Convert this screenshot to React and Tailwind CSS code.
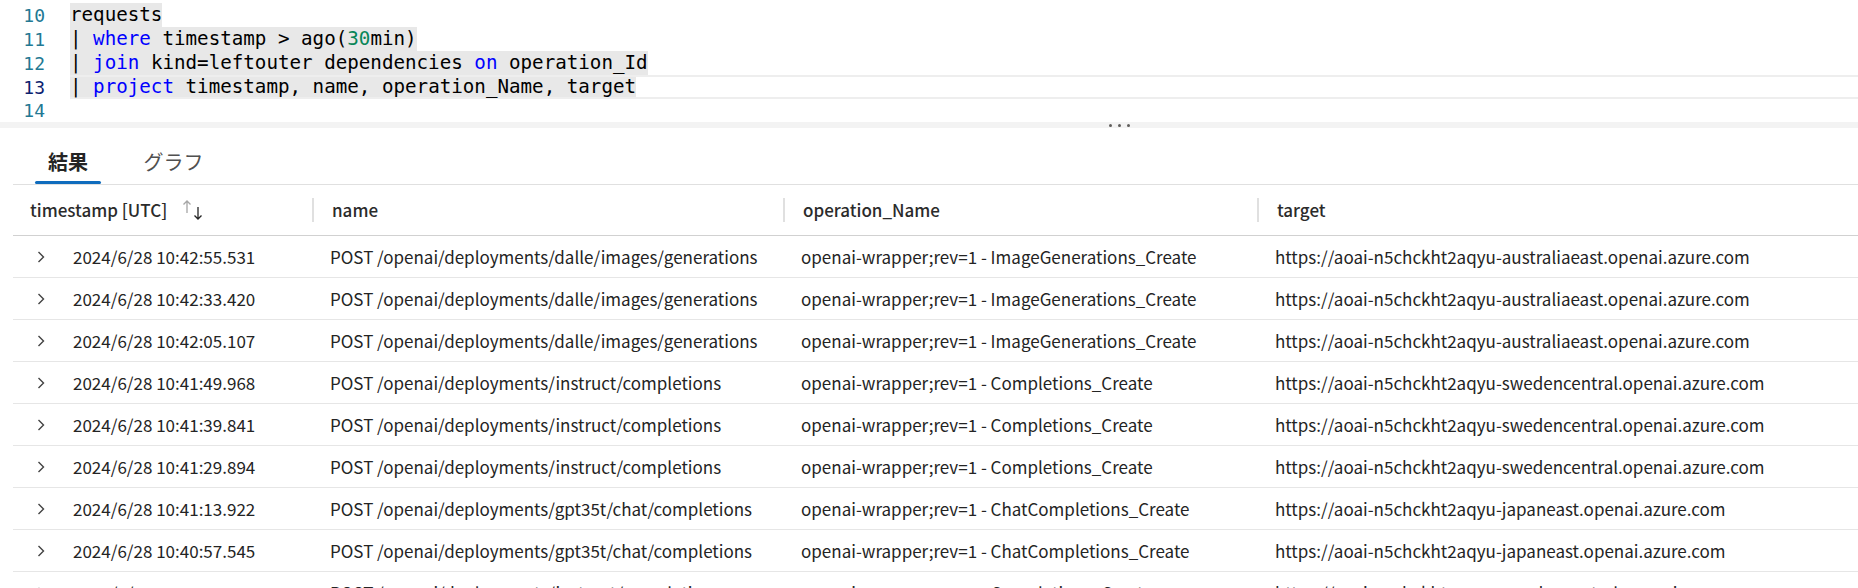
import { useState } from 'react';

const rows = [
  ['2024/6/28 10:42:55.531', 'POST /openai/deployments/dalle/images/generations', 'openai-wrapper;rev=1 - ImageGenerations_Create', 'https://aoai-n5chckht2aqyu-australiaeast.openai.azure.com'],
  ['2024/6/28 10:42:33.420', 'POST /openai/deployments/dalle/images/generations', 'openai-wrapper;rev=1 - ImageGenerations_Create', 'https://aoai-n5chckht2aqyu-australiaeast.openai.azure.com'],
  ['2024/6/28 10:42:05.107', 'POST /openai/deployments/dalle/images/generations', 'openai-wrapper;rev=1 - ImageGenerations_Create', 'https://aoai-n5chckht2aqyu-australiaeast.openai.azure.com'],
  ['2024/6/28 10:41:49.968', 'POST /openai/deployments/instruct/completions', 'openai-wrapper;rev=1 - Completions_Create', 'https://aoai-n5chckht2aqyu-swedencentral.openai.azure.com'],
  ['2024/6/28 10:41:39.841', 'POST /openai/deployments/instruct/completions', 'openai-wrapper;rev=1 - Completions_Create', 'https://aoai-n5chckht2aqyu-swedencentral.openai.azure.com'],
  ['2024/6/28 10:41:29.894', 'POST /openai/deployments/instruct/completions', 'openai-wrapper;rev=1 - Completions_Create', 'https://aoai-n5chckht2aqyu-swedencentral.openai.azure.com'],
  ['2024/6/28 10:41:13.922', 'POST /openai/deployments/gpt35t/chat/completions', 'openai-wrapper;rev=1 - ChatCompletions_Create', 'https://aoai-n5chckht2aqyu-japaneast.openai.azure.com'],
  ['2024/6/28 10:40:57.545', 'POST /openai/deployments/gpt35t/chat/completions', 'openai-wrapper;rev=1 - ChatCompletions_Create', 'https://aoai-n5chckht2aqyu-japaneast.openai.azure.com'],
  ['2024/6/28 10:39:53.147', 'POST /openai/deployments/instruct/completions', 'openai-wrapper;rev=1 - Completions_Create', 'https://aoai-n5chckht2aqyu-swedencentral.openai.azure.com'],
];

const Kw = ({ children }) => <span className="text-[#0000ff]">{children}</span>;

const CodeLine = ({ num, current, children }) => (
  <div className="flex h-[24px] items-center">
    <div className={`w-[45px] text-right text-[18px] ${current ? 'text-[#0b216f]' : 'text-[#237893]'}`}>{num}</div>
    <div className={`ml-[25px] flex h-full flex-1 items-center ${current ? 'border-y-2 border-[#eeeeee]' : ''}`}>
      {children && <span className="flex h-full items-center whitespace-pre bg-[#e8e8e8] text-black">{children}</span>}
    </div>
  </div>
);

const SortIcon = () => (
  <svg width="24" height="22" viewBox="0 0 24 22" className="ml-[14px]">
    <path d="M6 14V2M2.5 5.5 6 2l3.5 3.5" fill="none" stroke="#a6a6a6" strokeWidth="1.3" />
    <path d="M17 8v12M13.5 16.5 17 20l3.5-3.5" fill="none" stroke="#242424" strokeWidth="1.3" />
  </svg>
);

const Chevron = () => (
  <svg width="8" height="12" viewBox="0 0 8 12">
    <path d="M1.5 1 6.5 6l-5 5" fill="none" stroke="#424242" strokeWidth="1.4" />
  </svg>
);

const HeadCell = ({ label, w }) => (
  <div className={`flex items-center ${w}`}>
    <div className="h-[24px] w-[2px] bg-[#e0e0e0]" />
    <span className="ml-[18px]">{label}</span>
  </div>
);

export default function App() {
  const [tab, setTab] = useState(0);

  return (
    <div className="h-[588px] w-[1858px] overflow-hidden bg-white">
      {/* Query editor */}
      <div className="pt-[3px] font-['DejaVu_Sans_Mono',monospace] text-[19.2px]">
        <CodeLine num="10">requests</CodeLine>
        <CodeLine num="11">| <Kw>where</Kw> timestamp &gt; ago(<span className="text-[#098658]">30</span>min)</CodeLine>
        <CodeLine num="12">| <Kw>join</Kw> kind=leftouter dependencies <Kw>on</Kw> operation_Id</CodeLine>
        <CodeLine num="13" current>| <Kw>project</Kw> timestamp, name, operation_Name, target</CodeLine>
        <div className="flex h-[23px] items-center">
          <div className="w-[45px] text-right text-[18px] text-[#237893]">14</div>
        </div>
      </div>

      {/* Splitter */}
      <div className="flex h-[6px] items-center gap-[6px] bg-[#f3f3f3] pl-[1109px]">
        <span className="h-[3px] w-[3px] rounded-full bg-[#605e5c]" />
        <span className="h-[3px] w-[3px] rounded-full bg-[#605e5c]" />
        <span className="h-[3px] w-[3px] rounded-full bg-[#605e5c]" />
      </div>

      <div className="font-['Noto_Sans_CJK_JP',sans-serif]">
        {/* Tabs */}
        <div className="ml-[13px] flex border-b border-[#e0e0e0]">
          {['結果', 'グラフ'].map((t, i) => (
            <button
              key={t}
              onClick={() => setTab(i)}
              className={`flex flex-col items-center pt-[20px] ${i === 0 ? 'ml-[22px] w-[66px]' : 'ml-[30px] w-[85px]'}`}
            >
              <span className={`text-[20px] leading-[28px] ${tab === i ? 'font-bold text-[#242424]' : 'font-normal text-[#505050]'}`}>{t}</span>
              <span className={`mt-[5px] h-[3px] w-full rounded-sm ${tab === i ? 'bg-[#0f6cbd]' : 'bg-transparent'}`} />
            </button>
          ))}
        </div>

        {/* Results table */}
        <div className="ml-[13px] whitespace-nowrap text-[17px]">
          <div className="flex h-[51px] items-center border-b border-[#d1d1d1] font-medium text-[#2b2b2b]">
            <div className="flex w-[299px] items-center pl-[17px]">
              <span>timestamp [UTC]</span>
              <SortIcon />
            </div>
            <HeadCell label="name" w="w-[471px]" />
            <HeadCell label="operation_Name" w="w-[474px]" />
            <HeadCell label="target" w="flex-1" />
          </div>
          {rows.map((r, i) => (
            <div key={i} className="flex h-[42px] items-center border-b border-[#e6e6e6] text-[#242424]">
              <div className="flex w-[299px] items-center pl-[24px]">
                <Chevron />
                <span className="ml-[28px]">{r[0]}</span>
              </div>
              <div className="w-[471px] pl-[18px]">{r[1]}</div>
              <div className="w-[474px] pl-[18px]">{r[2]}</div>
              <div className="flex-1 pl-[18px]">{r[3]}</div>
            </div>
          ))}
        </div>
      </div>
    </div>
  );
}
